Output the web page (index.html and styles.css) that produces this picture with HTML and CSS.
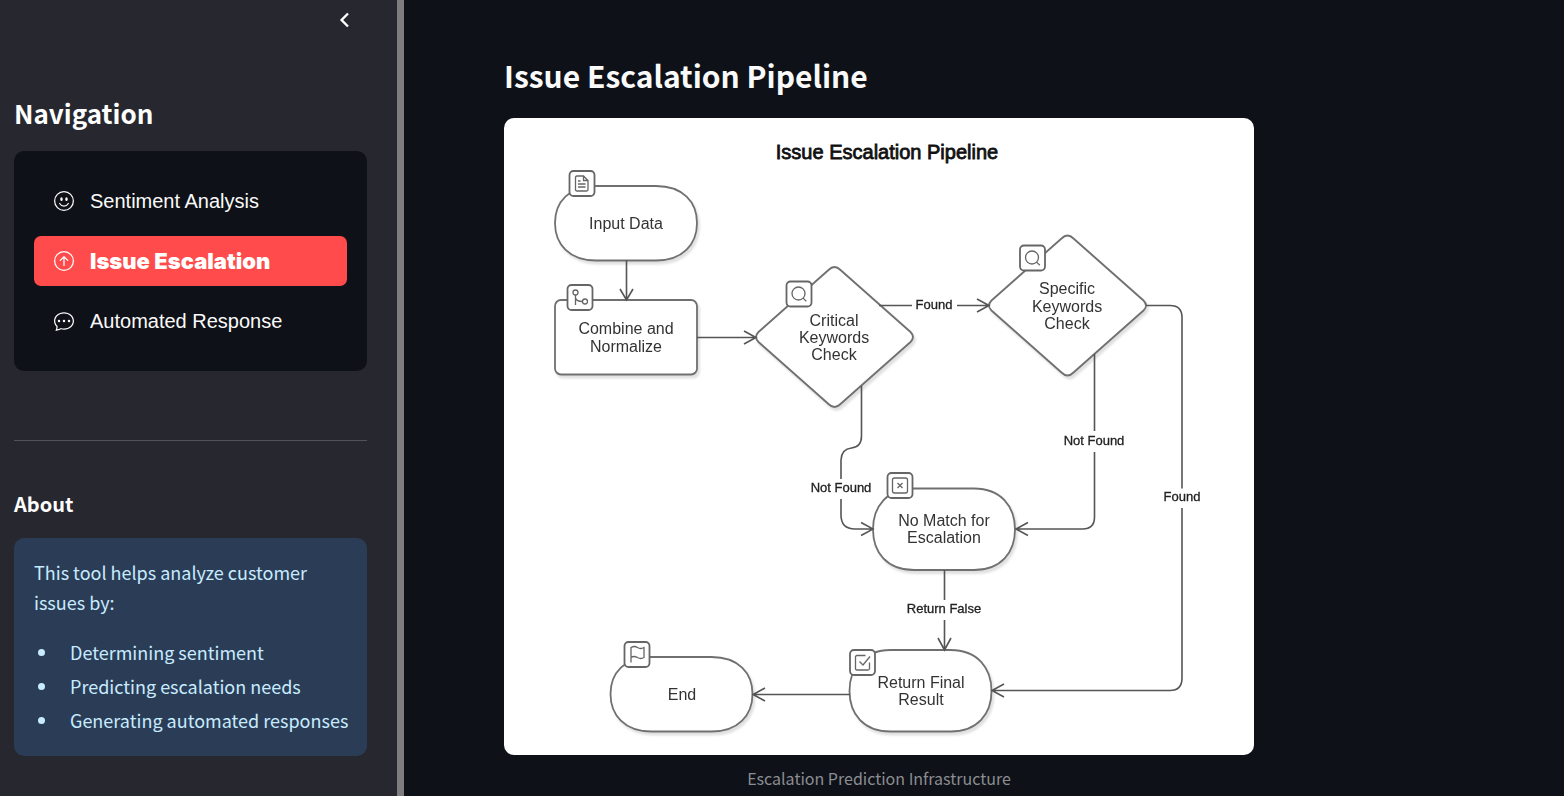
FILE: index.html
```html
<!DOCTYPE html>
<html lang="en">
<head>
<meta charset="utf-8">
<meta name="viewport" content="width=device-width, initial-scale=1">
<title>Issue Escalation Pipeline</title>
<link rel="stylesheet" href="styles.css">
</head>
<body>
<div class="app">
  <aside class="sidebar">
    <header class="sidebar-top">
      <button class="collapse" type="button" aria-label="Collapse sidebar">
        <svg width="20" height="20" viewBox="0 0 20 20" fill="none" stroke="currentColor" stroke-width="2.4"><path d="M14 3.5 7.6 10l6.4 6.5"/></svg>
      </button>
    </header>
    <h2 class="nav-title">Navigation</h2>
    <nav class="menu">
      <a class="menu-item" href="#sentiment">
        <svg class="menu-icon" viewBox="0 0 16 16" fill="currentColor"><path d="M8 15A7 7 0 1 1 8 1a7 7 0 0 1 0 14m0 1A8 8 0 1 0 8 0a8 8 0 0 0 0 16"/><path d="M4.285 9.567a.5.5 0 0 1 .683.183A3.5 3.5 0 0 0 8 11.5a3.5 3.5 0 0 0 3.032-1.75.5.5 0 1 1 .866.5A4.5 4.5 0 0 1 8 12.5a4.5 4.5 0 0 1-3.898-2.25.5.5 0 0 1 .183-.683M7 6.5C7 7.328 6.552 8 6 8s-1-.672-1-1.5S5.448 5 6 5s1 .672 1 1.5m4 0c0 .828-.448 1.5-1 1.5s-1-.672-1-1.5S9.448 5 10 5s1 .672 1 1.5"/></svg>
        Sentiment Analysis
      </a>
      <a class="menu-item active" href="#escalation" aria-current="page">
        <svg class="menu-icon" viewBox="0 0 16 16" fill="currentColor"><path d="M1 8a7 7 0 1 0 14 0A7 7 0 0 0 1 8m15 0A8 8 0 1 1 0 8a8 8 0 0 1 16 0m-7.5 3.5a.5.5 0 0 1-1 0V5.707L5.354 7.854a.5.5 0 1 1-.708-.708l3-3a.5.5 0 0 1 .708 0l3 3a.5.5 0 0 1-.708.708L8.5 5.707z"/></svg>
        Issue Escalation
      </a>
      <a class="menu-item" href="#response">
        <svg class="menu-icon" viewBox="0 0 16 16" fill="currentColor"><path d="M5 8a1 1 0 1 1-2 0 1 1 0 0 1 2 0m4 0a1 1 0 1 1-2 0 1 1 0 0 1 2 0m3 1a1 1 0 1 0 0-2 1 1 0 0 0 0 2"/><path d="m2.165 15.803.02-.004c1.83-.363 2.948-.842 3.468-1.105A9 9 0 0 0 8 15c4.418 0 8-3.134 8-7s-3.582-7-8-7-8 3.134-8 7c0 1.76.743 3.37 1.97 4.6a10.4 10.4 0 0 1-.524 2.318l-.003.011a11 11 0 0 1-.244.637c-.079.186.074.394.273.362a22 22 0 0 0 .693-.125m.8-3.108a1 1 0 0 0-.287-.801C1.618 10.83 1 9.468 1 8c0-3.192 3.004-6 7-6s7 2.808 7 6-3.004 6-7 6a8 8 0 0 1-2.088-.272 1 1 0 0 0-.711.074c-.387.196-1.24.57-2.634.893a11 11 0 0 0 .398-2"/></svg>
        Automated Response
      </a>
    </nav>
    <hr class="rule">
    <h3 class="about-title">About</h3>
    <section class="info">
      <p class="info-text">This tool helps analyze customer issues by:</p>
      <ul class="info-list">
        <li>Determining sentiment</li>
        <li>Predicting escalation needs</li>
        <li>Generating automated responses</li>
      </ul>
    </section>
  </aside>

  <main class="main">
    <h1 class="page-title">Issue Escalation Pipeline</h1>
    <figure class="figure">
      <svg class="diagram" viewBox="504 118 750 637" role="img" aria-label="Issue escalation flowchart">
        <defs>
          <path id="diamond" d="M-6-67Q0-73 6-67L76-5Q81 0 76 5L6 67Q0 73-6 67L-76 5Q-81 0-76-5Z"/>
          <rect id="badge" width="25" height="25" rx="4"/>
          <g id="search"><circle cx="12" cy="12" r="6.5"/><path d="m16.600 16.600 3.200 3.200"/></g>
          <path id="pill" d="M41 0H101C128 0 142 16 142 37S128 74.500 101 74.500H41C14 74.500 0 58 0 37S14 0 41 0Z"/>
          <path id="pill-tall" d="M41 0H101C128 0 142 18 142 41S128 81.500 101 81.500H41C14 81.500 0 64 0 41S14 0 41 0Z"/>
        </defs>
        <text class="heading" x="887" y="159">Issue Escalation Pipeline</text>

        <g class="node">
          <use href="#pill" x="555" y="186"/>
          <rect x="555" y="300" width="142" height="74.500" rx="6"/>
          <use href="#diamond" x="834.500" y="337"/>
          <use href="#diamond" x="1067.500" y="305.500"/>
          <use href="#pill-tall" x="873" y="488.500"/>
          <use href="#pill-tall" x="849.500" y="650"/>
          <use href="#pill" x="610.500" y="657"/>
        </g>

        <g class="edge">
          <path d="M626.500 260V300M620 289l6.500 11 6.500-11"/>
          <path d="M697 337.500H756M744 331l12 6.500-12 6.500"/>
          <path d="M879 305.500h33M957 305.500h32M977 299l12 6.500-12 6.500"/>
          <path d="M861.500 386v50q0 11-10 12t-10.500 12v19M841 499v16q0 14 14 14h18M861 522.500l12 6.500-12 6.500"/>
          <path d="M1094.500 354v77M1094.500 452v65q0 12-12 12H1016M1028 522.500l-12 6.500 12 6.500"/>
          <path d="M1146 305.500h24q12 0 12 12v171M1182 508v170q0 12.500-12 12.500H992M1004 684l-12 6.500 12 6.500"/>
          <path d="M944.500 570v30M944.500 620v30M938 638l6.500 12 6.500-12"/>
          <path d="M850 694.500H753M765 688l-12 6.500 12 6.500"/>
        </g>

        <g class="badge">
          <g transform="translate(569.500 171)"><use href="#badge"/><g class="glyph"><path d="M7.500 5h6.500l4.500 4.500v9q0 1.500-1.500 1.500h-9.500q-1.500 0-1.500-1.500v-12q0-1.500 1.500-1.500zM14 5v4.500h4.500M8.500 10h2.500M8.500 13h7.500M8.500 16h7.500"/></g></g>
          <g transform="translate(567.500 285)"><use href="#badge"/><g class="glyph"><circle cx="8" cy="7.500" r="2.500"/><circle cx="17.500" cy="16.500" r="2.500"/><path d="M8 10v10M8 13q1 3.500 7 3.500"/></g></g>
          <g transform="translate(786.500 281.500)"><use href="#badge"/><use class="glyph" href="#search"/></g>
          <g transform="translate(1020 245.500)"><use href="#badge"/><use class="glyph" href="#search"/></g>
          <g transform="translate(887.500 473)"><use href="#badge"/><g class="glyph"><rect x="5" y="5" width="15" height="15" rx="2"/><path d="m10 10 5 5M15 10l-5 5"/></g></g>
          <g transform="translate(850 650)"><use href="#badge"/><g class="glyph"><path d="M19.500 12.500v6q0 1.500-1.500 1.500h-11q-1.500 0-1.500-1.500v-11.500q0-1.500 1.500-1.500h8.500M9.500 11.500l3.500 3.500 7-8.500"/></g></g>
          <g transform="translate(624.500 642)"><use href="#badge"/><g class="glyph"><path d="M6.500 20.500V5.500q3.500-2 6.500 0t6.500 0v10q-3 2-6.500 0t-6.500 0"/></g></g>
        </g>

        <g class="label">
          <text x="626" y="229">Input Data</text>
          <text><tspan x="626" y="334">Combine and</tspan><tspan x="626" y="352">Normalize</tspan></text>
          <text><tspan x="834" y="326">Critical</tspan><tspan x="834" y="343">Keywords</tspan><tspan x="834" y="360">Check</tspan></text>
          <text><tspan x="1067" y="294">Specific</tspan><tspan x="1067" y="312">Keywords</tspan><tspan x="1067" y="329">Check</tspan></text>
          <text><tspan x="944" y="526">No Match for</tspan><tspan x="944" y="543">Escalation</tspan></text>
          <text><tspan x="921" y="688">Return Final</tspan><tspan x="921" y="705">Result</tspan></text>
          <text x="682" y="700">End</text>
        </g>
        <g class="edge-label">
          <text x="934" y="309">Found</text>
          <text x="841" y="492">Not Found</text>
          <text x="1094" y="445">Not Found</text>
          <text x="1182" y="501">Found</text>
          <text x="944" y="613">Return False</text>
        </g>
      </svg>
      <figcaption class="caption">Escalation Prediction Infrastructure</figcaption>
    </figure>
  </main>
</div>
</body>
</html>
```
FILE: styles.css
```css
* { box-sizing: border-box; }

body {
  margin: 0;
  background: #0e1117;
  color: #fafafa;
  font-family: "Noto Sans CJK SC", "Noto Sans", sans-serif;
}

h1, h2, h3, p, ul, figure { margin: 0; }

.app { display: flex; min-height: 100vh; }

.sidebar {
  flex: 0 0 404px;
  padding: 0 30px 40px 14px;
  background: #272730;
  border-right: 7px solid #7f7c80;
}

.sidebar-top {
  display: flex;
  justify-content: flex-end;
  padding: 10px 13px 0 0;
}

.collapse {
  display: flex;
  padding: 0;
  border: 0;
  background: none;
  color: #fff;
}

.nav-title {
  margin-top: 63px;
  font-size: 26px;
  line-height: 40px;
  font-weight: 700;
  color: #fff;
}

.menu {
  display: flex;
  flex-direction: column;
  gap: 10px;
  margin-top: 18px;
  padding: 25px 20px;
  border-radius: 10px;
  background: #0e1117;
}

.menu-item {
  display: flex;
  align-items: center;
  gap: 16px;
  height: 50px;
  padding: 0 20px;
  border-radius: 7px;
  color: #fafafa;
  font-family: "Liberation Sans", Arial, sans-serif;
  font-size: 20px;
  text-decoration: none;
}

.menu-item.active {
  background: #ff4b4b;
  color: #fff;
  font-family: Inter, "Liberation Sans", sans-serif;
  font-size: 22px;
  font-weight: 900;
}

.menu-icon { flex: none; width: 20px; height: 20px; }

.rule {
  height: 1px;
  margin: 69px 0 0;
  border: 0;
  background: #515158;
}

.about-title {
  margin-top: 48px;
  font-size: 20px;
  line-height: 30px;
  font-weight: 700;
  color: #fff;
}

.info {
  margin-top: 19px;
  padding: 19px 16px 21px 20px;
  border-radius: 10px;
  background: #2b3d56;
  color: #c7ebff;
  font-size: 18px;
  line-height: 30px;
}

.info-list {
  display: grid;
  gap: 4px;
  margin-top: 20px;
  padding-left: 25px;
}

.info-list li { padding-left: 11px; }

.main {
  flex: 1;
  min-width: 0;
  padding: 50px 100px 0;
}

.page-title {
  font-size: 30px;
  line-height: 50px;
  font-weight: 700;
}

.figure { max-width: 750px; margin-top: 18px; }

.diagram {
  display: block;
  width: 100%;
  border-radius: 10px;
  background: #fff;
  font-family: "Liberation Sans", Arial, sans-serif;
}

.heading {
  fill: #111;
  stroke: #111;
  stroke-width: 0.8px;
  font-size: 20px;
  text-anchor: middle;
}

.edge { fill: none; stroke: #555; stroke-width: 1.6px; }

.node {
  fill: #fff;
  stroke: #707070;
  stroke-width: 1.8px;
  filter: drop-shadow(2px 3px 1px rgba(0, 0, 0, 0.12));
}

.badge { fill: #fff; stroke: #666; stroke-width: 1.8px; }

.glyph { fill: none; stroke: #666; stroke-width: 1.3px; }

.label { fill: #333; font-size: 16px; text-anchor: middle; }

.edge-label {
  fill: #222;
  stroke: #222;
  stroke-width: 0.3px;
  font-size: 13px;
  text-anchor: middle;
}

.caption {
  margin-top: 11px;
  color: #8b8d92;
  font-size: 16px;
  line-height: 24px;
  text-align: center;
}
```
